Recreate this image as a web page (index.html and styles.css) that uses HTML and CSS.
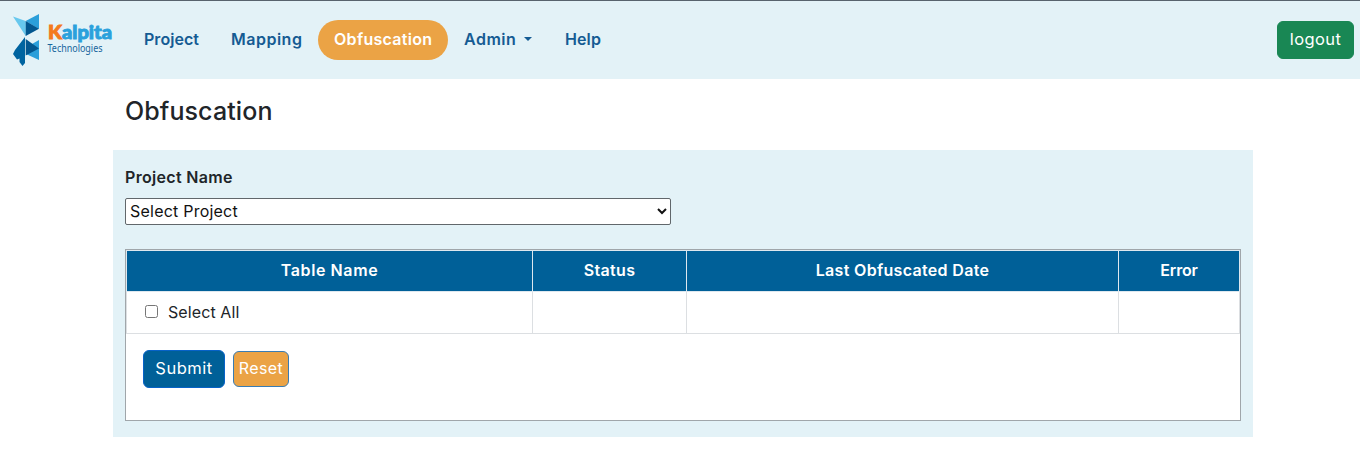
FILE: index.html
```html
<!DOCTYPE html>
<html lang="en">
<head>
<meta charset="utf-8">
<title>Obfuscation</title>
<link rel="stylesheet" href="styles.css">
</head>
<body>
<header class="navbar">
  <svg class="logo" width="104" height="56" viewBox="0 0 104 56" role="img" aria-label="Kalpita Technologies">
    <path fill="#67c8ee" d="M1 4.500 13.700 9V24Z"/>
    <path fill="#2b9fda" d="M13.700 9 27 2V17Z"/>
    <path fill="#03578f" d="M13.700 9 27 16.700 13.700 24Z"/>
    <path fill="#2b9fda" d="M27 28V48L14 42 20 32Z"/>
    <path fill="#03578f" d="M13.700 27 27 36.500 13.700 43.500Z"/>
    <path fill="#0064a0" d="M13 25V51L10.500 54 7.500 50V46.500L5 47.500 1 42 3 38Z"/>
    <text class="logo-name" x="36" y="26.500" textLength="64" lengthAdjust="spacingAndGlyphs"><tspan class="logo-k">K</tspan>alpita</text>
    <text class="logo-sub" x="35.500" y="39.500" textLength="55" lengthAdjust="spacingAndGlyphs">Technologies</text>
  </svg>
  <nav class="nav">
    <a class="nav-link project">Project</a>
    <a class="nav-link mapping">Mapping</a>
    <a class="nav-link obfuscation active">Obfuscation</a>
    <a class="nav-link admin">Admin<span class="caret"></span></a>
    <a class="nav-link help">Help</a>
  </nav>
  <button class="btn logout">logout</button>
</header>
<main class="container">
  <h1 class="title">Obfuscation</h1>
  <section class="panel">
    <label class="label" for="project">Project Name</label>
    <select class="select" id="project"><option>Select Project</option></select>
    <div class="box">
      <table class="table">
        <colgroup><col class="col-name"><col class="col-status"><col class="col-date"><col class="col-error"></colgroup>
        <thead><tr><th class="th-name">Table Name</th><th class="th-status">Status</th><th class="th-date">Last Obfuscated Date</th><th class="th-error">Error</th></tr></thead>
        <tbody><tr><td><label class="check"><input type="checkbox" class="checkbox"><span class="check-text">Select All</span></label></td><td></td><td></td><td></td></tr></tbody>
      </table>
      <div class="actions">
        <button class="btn submit">Submit</button>
        <button class="btn reset">Reset</button>
      </div>
    </div>
  </section>
</main>
</body>
</html>
```
FILE: styles.css
```css
* { box-sizing: border-box; }
body {
  margin: 0;
  background: #fff;
  color: #212529;
  font: 400 16px/24px Inter, "Open Sans", sans-serif;
}
.navbar {
  display: flex;
  align-items: center;
  height: 79px;
  padding: 0 6px 0 12px;
  border-top: 1px solid #58636d;
  background: #e3f2f7;
}
.logo { display: block; flex: none; }
.logo-name {
  font: 900 18.500px Lato, sans-serif;
  fill: #2ba1dc;
  stroke: #2ba1dc;
  stroke-width: .9px;
}
.logo-k { fill: #f47a1d; stroke: #f47a1d; }
.logo-sub { font: 400 10px "Noto Sans", sans-serif; fill: #17659c; }
.nav { display: flex; margin-left: 12px; }
.nav-link {
  display: flex;
  align-items: center;
  height: 40px;
  padding: 0 0 2px 16px;
  border-radius: 20px;
  color: #155b93;
  font-weight: 600;
  white-space: nowrap;
}
.project { width: 87px; letter-spacing: .05px; }
.mapping { width: 103px; letter-spacing: .5px; }
.obfuscation { width: 130px; letter-spacing: .3px; }
.admin { width: 101px; letter-spacing: .5px; }
.help { width: 68px; letter-spacing: .1px; }
.active { background: #eba345; color: #fff; }
.caret {
  margin-left: 8px;
  border: 4px solid transparent;
  border-top-color: #155b93;
  border-bottom: 0;
}
.btn {
  height: 38px;
  padding: 0 0 2px;
  border: 1px solid #0d6efd;
  border-radius: 6px;
  color: #fff;
  font: inherit;
}
.logout { width: 77px; margin-left: auto; border-color: #198754; background: #198754; font-size: 16.500px; letter-spacing: .4px; }
.container { width: 1140px; margin-left: 113px; }
.title {
  margin: 0;
  padding: 17px 12px 24px;
  font-size: 25px;
  line-height: 30px;
  font-weight: 500;
  letter-spacing: .1px;
}
.panel { height: 287px; padding: 15px 12px; background: #e3f2f7; }
.label { display: block; font-weight: 600; letter-spacing: .33px; }
.select {
  display: block;
  width: 546px;
  height: 27px;
  margin-top: 9px;
  padding: 0 0 2px;
  border: 1px solid #61676b;
  border-radius: 2px;
  background-color: #fff;
  color: #111;
  font: inherit;
  letter-spacing: .22px;
}
.box { height: 172px; margin-top: 24px; border: 1px solid #a0a6aa; background: #fff; }
.table { width: 1114px; table-layout: fixed; border-collapse: collapse; }
.col-name { width: 406px; }
.col-status { width: 154px; }
.col-date { width: 432px; }
.col-error { width: 121px; }
.table th {
  height: 41px;
  padding: 0 0 2px;
  border: 1px solid #dee8ef;
  background: #006098;
  color: #fff;
  font-weight: 600;
}
.table .th-name { letter-spacing: .6px; }
.table .th-status { letter-spacing: .35px; }
.table .th-date { letter-spacing: .32px; }
.table .th-error { letter-spacing: -.2px; }
.table td { height: 42px; padding: 0 0 0 18px; border: 1px solid #dcdfe2; }
.check { display: flex; align-items: center; }
.checkbox { width: 13px; height: 13px; margin: 0 10px 2px 0; }
.check-text { margin: -1px 0 1px; letter-spacing: .1px; }
.actions { display: flex; align-items: center; gap: 8px; padding: 16px 17px; }
.submit { width: 82px; border-color: #0762c8; background: #006098; font-size: 16.500px; letter-spacing: .5px; }
.reset { width: 56px; height: 36px; border-color: #397cb3; background: #eba345; letter-spacing: .4px; }
```
